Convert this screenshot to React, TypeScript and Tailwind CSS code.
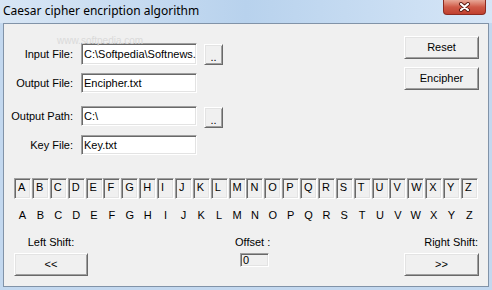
import React from "react";

const font = "font-['Liberation_Sans',Arial,sans-serif] text-[11px] text-black";
const sunken =
  "border border-t-[#a0a0a0] border-l-[#a0a0a0] border-r-white border-b-white shadow-[inset_1px_1px_0_#696969,inset_-1px_-1px_0_#e3e3e3]";
const raised =
  "border border-t-white border-l-white border-r-[#696969] border-b-[#696969] shadow-[inset_1px_1px_0_#e3e3e3,inset_-1px_-1px_0_#a0a0a0] bg-[#f0f0f0]";

function Label({ children, h }: { children: React.ReactNode; h: string }) {
  return (
    <div className={`w-[59px] ${h} flex items-center justify-end whitespace-nowrap`}>
      {children}
    </div>
  );
}

export default function App() {
  const letters = "ABCDEFGHIJKLMNOPQRSTUVWXYZ".split("");
  return (
    <div className={`w-[492px] h-[290px] flex flex-col bg-[#c3d8ef] overflow-hidden ${font}`}>
      {/* Title bar */}
      <div className="h-[23px] flex items-start bg-linear-to-r from-[#d8e6f5] via-[#b8d2ed] to-[#d6e6f7]">
        <span className="ml-[3px] mt-[2px] text-[12px] leading-[17px] font-['Noto_Sans',sans-serif] text-black whitespace-nowrap">
          Caesar cipher encription algorithm
        </span>
        <div className="ml-auto mr-[6px] w-[43px] h-[15px] rounded-b-[4px] border border-t-0 border-[#8c2b21] bg-linear-to-b from-[#e7a797] via-[#cf5a48] to-[#c0402f] flex items-center justify-center">
          <svg width="13" height="10" viewBox="0 0 13 10">
            <path d="M3 2 L10 8 M10 2 L3 8" stroke="#5a1a12" strokeWidth="4" strokeLinecap="round" />
            <path d="M3 2 L10 8 M10 2 L3 8" stroke="#ffffff" strokeWidth="2.2" strokeLinecap="round" />
          </svg>
        </div>
      </div>

      {/* Client area */}
      <div className="flex-1 mx-[3px] mb-[3px] border border-[#8193a8] bg-[#f0f0f0] relative pl-[10px] pr-[9px] flex flex-col">
        <div className="absolute left-[53px] top-[9px] text-[10px] text-[#dadada] pointer-events-none">
          www.softpedia.com
        </div>

        {/* Top section */}
        <div className="flex items-start h-[129px]">
          <div className="pt-[19px] flex flex-col">
            <div className="flex items-start">
              <Label h="h-[22px]">Input File:</Label>
              <div className={`ml-[8px] w-[116px] h-[22px] bg-white ${sunken} flex items-center pl-[2px] overflow-hidden whitespace-nowrap`}>
                C:\Softpedia\Softnews.
              </div>
              <div className={`ml-[7px] mt-[1px] w-[19px] h-[21px] ${raised} flex items-end justify-center pb-[3px] leading-[8px]`}>
                ..
              </div>
            </div>
            <div className="flex items-start mt-[8px]">
              <Label h="h-[20px]">Output File:</Label>
              <div className={`ml-[8px] w-[116px] h-[20px] bg-white ${sunken} flex items-center pl-[2px] overflow-hidden whitespace-nowrap`}>
                Encipher.txt
              </div>
            </div>
            <div className="flex items-start mt-[13px]">
              <Label h="h-[20px]">Output Path:</Label>
              <div className={`ml-[8px] w-[116px] h-[20px] bg-white ${sunken} flex items-center pl-[2px] overflow-hidden whitespace-nowrap`}>
                C:\
              </div>
              <div className={`ml-[7px] mt-[1px] w-[19px] h-[21px] ${raised} flex items-end justify-center pb-[3px] leading-[8px]`}>
                ..
              </div>
            </div>
            <div className="flex items-start mt-[7px]">
              <Label h="h-[20px]">Key File:</Label>
              <div className={`ml-[8px] w-[116px] h-[20px] bg-white ${sunken} flex items-center pl-[2px] overflow-hidden whitespace-nowrap`}>
                Key.txt
              </div>
            </div>
          </div>

          <div className="ml-auto pt-[12px] flex flex-col gap-[8px]">
            <div className={`w-[75px] h-[23px] ${raised} flex items-center justify-center`}>Reset</div>
            <div className={`w-[75px] h-[23px] ${raised} flex items-center justify-center`}>Encipher</div>
          </div>
        </div>

        {/* Letter boxes */}
        <div className="mt-[25px] w-[464px] flex justify-between">
          {letters.map((l) => (
            <div
              key={l}
              className={`w-[17px] h-[21px] bg-[#f0f0f0] ${sunken} pl-[3px] pt-[2px] leading-[13px] overflow-hidden`}
            >
              {l}
            </div>
          ))}
        </div>

        {/* Letters row */}
        <div className="mt-[10px] w-[464px] flex justify-between h-[13px]">
          {letters.map((l) => (
            <span key={l} className="w-[17px] text-center leading-[13px]">
              {l}
            </span>
          ))}
        </div>

        {/* Bottom controls */}
        <div className="mt-[14px] flex items-start">
          <div className="w-[74px] flex flex-col items-center">
            <div className="h-[13px] leading-[13px] whitespace-nowrap">Left Shift:</div>
            <div className={`mt-[4px] w-[74px] h-[23px] ${raised} flex items-center justify-center`}>&lt;&lt;</div>
          </div>
          <div className="ml-[147px] flex flex-col items-start">
            <div className="h-[13px] leading-[13px] whitespace-nowrap">Offset :</div>
            <div className={`mt-[4px] ml-[5px] w-[29px] h-[14px] bg-[#f0f0f0] ${sunken} flex items-center pl-[2px] leading-[11px]`}>
              0
            </div>
          </div>
          <div className="ml-auto w-[75px] flex flex-col items-end">
            <div className="h-[13px] leading-[13px] whitespace-nowrap pr-[1px]">Right Shift:</div>
            <div className={`mt-[4px] w-[75px] h-[23px] ${raised} flex items-center justify-center`}>&gt;&gt;</div>
          </div>
        </div>
      </div>
    </div>
  );
}
